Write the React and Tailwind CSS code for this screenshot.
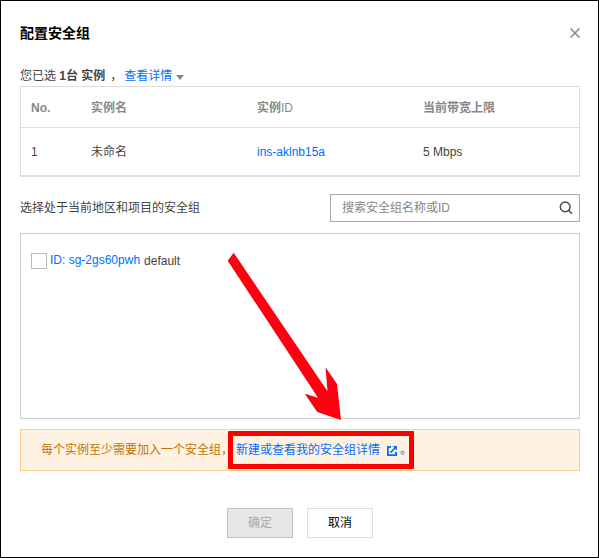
const instances = [
  { no: 1, name: "未命名", id: "ins-aklnb15a", bandwidth: "5 Mbps" },
];

const groups = [{ id: "sg-2gs60pwh", name: "default" }];

const CloseIcon = () => (
  <svg width="10" height="10" viewBox="0 0 10 10" fill="none">
    <path d="M0.5 0.5L9.5 9.5M9.5 0.5L0.5 9.5" stroke="#888" strokeWidth="1.5" />
  </svg>
);

const SearchIcon = () => (
  <svg width="14" height="14" viewBox="0 0 14 14" fill="none" stroke="#444" strokeWidth="1.4">
    <circle cx="6.2" cy="5.9" r="4.9" />
    <path d="M9.6 9.3L13 12.7" />
  </svg>
);

const ExternalIcon = () => (
  <svg width="10" height="10" viewBox="0 0 10 10" fill="none" stroke="#006eff" strokeWidth="1.8">
    <path d="M4 0.9H0.9V9.1H9.1V6" />
    <path d="M3.4 6.6L8 2" strokeWidth="1.5" />
    <path d="M5.6 0H10V4.4Z" fill="#006eff" stroke="none" />
  </svg>
);

const InstanceTable = ({ rows }) => (
  <div className="h-[91px] border border-b-2 border-[#ddd]">
    <div className="grid h-[41px] grid-cols-[60px_166px_166px_1fr] items-center border-b border-[#ddd] pl-2.5 pt-px font-bold text-[#888]">
      <span>No.</span>
      <span>实例名</span>
      <span>
        实例<span className="font-normal">ID</span>
      </span>
      <span>当前带宽上限</span>
    </div>
    {rows.map((row) => (
      <div
        key={row.id}
        className="grid h-[47px] grid-cols-[60px_166px_166px_1fr] items-center pl-2.5"
      >
        <span>{row.no}</span>
        <span>{row.name}</span>
        <a className="text-[#006eff]">{row.id}</a>
        <span>{row.bandwidth}</span>
      </div>
    ))}
  </div>
);

const App = () => {
  return (
    <div className="relative h-[558px] w-[599px] overflow-hidden border border-black bg-white pl-[19px] pr-[18px] font-['Liberation_Sans','Noto_Sans_CJK_SC',sans-serif] text-xs leading-[18px] text-[#444]">
      <div className="flex h-16 items-center justify-between">
        <h3 className="text-sm font-bold text-black">配置安全组</h3>
        <CloseIcon />
      </div>

      <div className="flex h-[21px] items-center whitespace-pre">
        <span>您已选 </span>
        <b>1台 实例</b>
        <span className="ml-[5px] w-[14px]">，</span>
        <a className="text-[#006eff]">查看详情</a>
        <span className="ml-1 mt-1 border-x-4 border-t-[5px] border-x-transparent border-t-[#888]" />
      </div>

      <InstanceTable rows={instances} />

      <div className="mt-[17px] flex items-center justify-between">
        <span>选择处于当前地区和项目的安全组</span>
        <div className="flex h-7 w-[250px] items-center justify-between border border-[#aaa] pl-[11px] pr-1.5 text-[#888]">
          <span>搜索安全组名称或ID</span>
          <SearchIcon />
        </div>
      </div>

      <div className="mt-[11px] h-[186px] border border-[#ccc] px-2.5 pt-[19px]">
        {groups.map((group) => (
          <div key={group.id} className="flex h-4 items-center">
            <span className="size-4 border border-[#bbb]" />
            <a className="ml-[3px] pb-0.5 text-[#006eff]">ID: {group.id}</a>
            <span className="ml-1">{group.name}</span>
          </div>
        ))}
      </div>

      <div className="mt-2.5 flex h-[42px] items-center border border-[#ffd18b] bg-[#fff2e3] pl-5 text-[#c07400]">
        <span className="w-[195px] whitespace-nowrap">每个实例至少需要加入一个安全组，</span>
        <a className="text-[#006eff]">新建或查看我的安全组详情</a>
        <span className="ml-[7px] mt-0.5">
          <ExternalIcon />
        </span>
        <span className="ml-[3px] text-[#006eff]">。</span>
      </div>

      <div className="mt-[37px] flex justify-center gap-[14px]">
        <button className="h-[30px] w-[66px] border border-[#c0c1cb] bg-[#e7e7e7] text-[#aaa]">
          确定
        </button>
        <button className="h-[30px] w-[66px] border border-[#ddd] bg-white text-black">取消</button>
      </div>

      {/* Highlight and pointer over the details link */}
      <div className="absolute left-[227px] top-[430px] h-[38px] w-[186px] rounded-[1px] border-5 border-[#ff0000]" />
      <svg
        className="absolute left-[226px] top-[250px]"
        width="116"
        height="171"
        viewBox="227 251 116 171"
        fill="#ff0011"
      >
        <path d="M233.7 252.7L227.7 260.7L318 397.7L304.7 393.7L317.3 412L341 420L337 384L325.5 367.3L327.5 391.3Z" />
      </svg>
    </div>
  );
};

export default App;
